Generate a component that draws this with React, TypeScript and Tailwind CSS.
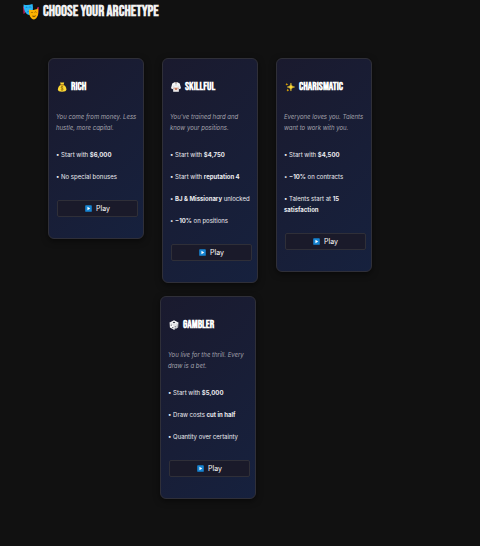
import React from 'react';

type IconProps = { className?: string };

const MasksIcon: React.FC<IconProps> = ({ className }) => (
    <svg viewBox="0 0 32 32" className={className} aria-hidden="true">
        <path d="M0 5h3l1 13-3 2zM28 7l4-1-2 17-3 1z" fill="#c2185b" />
        <path d="M1 1c6 2 12 1 18-1 2 10 1 19-6 22C5 21 1 12 1 1z" fill="#29b6f6" />
        <path d="M5 8c1-2 3-2 4 0M12 7c1-2 3-2 4 0M8 17c1-3 4-3 5-1" stroke="#0277bd" strokeWidth="1.4" fill="none" />
        <path d="M12 11c7 2 12 1 18-2 2 11-1 20-8 22-7-1-11-10-10-20z" fill="#ffb300" />
        <path d="M16 18c1-2 3-2 4 0M23 17c1-2 3-2 4 0" stroke="#8d5a00" strokeWidth="1.5" fill="none" />
        <path d="M18 23c3 1 6 1 8-1 0 5-7 6-8 1z" fill="#8d5a00" />
    </svg>
);

const MoneyBagIcon: React.FC<IconProps> = ({ className }) => (
    <svg viewBox="0 0 32 32" className={className} aria-hidden="true">
        <path d="M10 1c3 2 4 0 6 1 3-2 4 1 7-1l-2 8h-9z" fill="#fdd835" />
        <path d="M12 9h9c6 4 9 9 9 14 0 6-5 8-14 8S3 29 3 23c0-5 3-10 9-14z" fill="#fdd835" />
        <path d="M11 8h11v3H11z" fill="#a66a00" />
        <path d="M20 16c-2-2-7-2-7 1 0 4 7 2 7 6 0 3-5 3-8 1M16 13v15" stroke="#7a5900" strokeWidth="2" fill="none" />
    </svg>
);

const UniformIcon: React.FC<IconProps> = ({ className }) => (
    <svg viewBox="0 0 32 32" className={className} aria-hidden="true">
        <path d="M11 1h10l7 4 4 15-6 3-1-5v13H7V18l-1 5-6-3L4 5z" fill="#f5f5f5" />
        <path d="M12 1l4 6 4-6" fill="#a1887f" />
        <path d="M12 1l8 13M20 1l-8 13M7 18l1-6M25 18l-1-6" stroke="#b0bec5" strokeWidth="1.2" fill="none" />
        <path d="M8 18h16v3h-6l3 5h-3l-2-3-2 3h-3l3-5H8z" fill="#bf6a4a" />
    </svg>
);

const SparklesIcon: React.FC<IconProps> = ({ className }) => (
    <svg viewBox="0 0 32 32" className={className} aria-hidden="true">
        <path d="M19 3c1 9 3 11 12 13-9 2-11 4-12 13-1-9-3-11-12-13 9-2 11-4 12-13z" fill="#fdd835" stroke="#fdd835" strokeWidth="1.5" />
        <path d="M6 2c1 4 1 4 5 5-4 1-4 1-5 5-1-4-1-4-5-5 4-1 4-1 5-5zM9 21c1 4 1 4 4 5-3 1-3 1-4 5-1-4-1-4-4-5 3-1 3-1 4-5z" fill="#f4b400" />
    </svg>
);

const DieIcon: React.FC<IconProps> = ({ className }) => (
    <svg viewBox="0 0 32 32" className={className} aria-hidden="true">
        <path d="M16 1l14 7-1 16-13 7-13-7L2 8z" fill="#fafafa" />
        <path d="M2 8l14 8 14-8M16 16v15" stroke="#b0b4bd" strokeWidth="1.4" fill="none" />
        <ellipse cx="16" cy="8" rx="4" ry="2.4" fill="#3b3f4a" />
        <circle cx="7" cy="16" r="2" fill="#3b3f4a" />
        <circle cx="12" cy="24" r="2" fill="#3b3f4a" />
        <circle cx="20" cy="20" r="1.8" fill="#3b3f4a" />
        <circle cx="26" cy="16" r="1.8" fill="#3b3f4a" />
        <circle cx="20" cy="26" r="1.8" fill="#3b3f4a" />
        <circle cx="26" cy="22" r="1.8" fill="#3b3f4a" />
    </svg>
);

const PlayIcon: React.FC<IconProps> = ({ className }) => (
    <svg viewBox="0 0 32 32" className={className} aria-hidden="true">
        <rect x="1" y="1" width="30" height="30" rx="3" fill="#1685d3" />
        <path d="M11 8l13 8-13 8z" fill="#fff" />
    </svg>
);

type Archetype = {
    name: string;
    icon: React.FC<IconProps>;
    blurb: string;
    perks: React.ReactNode[];
};

const rich: Archetype = {
    name: 'RICH',
    icon: MoneyBagIcon,
    blurb: 'You come from money. Less hustle, more capital.',
    perks: [<>Start with <b>$6,000</b></>, 'No special bonuses'],
};

const skillful: Archetype = {
    name: 'SKILLFUL',
    icon: UniformIcon,
    blurb: "You've trained hard and know your positions.",
    perks: [
        <>Start with <b>$4,750</b></>,
        <>Start with <b>reputation 4</b></>,
        <><b>BJ &amp; Missionary</b> unlocked</>,
        <><b>−10%</b> on positions</>,
    ],
};

const charismatic: Archetype = {
    name: 'CHARISMATIC',
    icon: SparklesIcon,
    blurb: 'Everyone loves you. Talents want to work with you.',
    perks: [
        <>Start with <b>$4,500</b></>,
        <><b>−10%</b> on contracts</>,
        <>Talents start at <b>15</b> <b>satisfaction</b></>,
    ],
};

const gambler: Archetype = {
    name: 'GAMBLER',
    icon: DieIcon,
    blurb: 'You live for the thrill. Every draw is a bet.',
    perks: [
        <>Start with <b>$5,000</b></>,
        <>Draw costs <b>cut in half</b></>,
        'Quantity over certainty',
    ],
};

const ArchetypeCard: React.FC<{ archetype: Archetype }> = ({ archetype }) => {
    const Icon = archetype.icon;
    return (
        <article className="w-24 rounded-md border border-[#2f2f38] bg-linear-135 from-[#1a1a2e] to-[#16213e] pt-[22px] pr-[5px] pb-[21px] pl-[7px] shadow-[0_2px_6px_rgba(0,0,0,0.5)]">
            <h3 className="flex items-center gap-1 pl-px font-['Bebas_Neue',sans-serif] text-[11px] leading-3 font-bold text-white">
                <Icon className="size-[10px] shrink-0" />
                {archetype.name}
            </h3>
            <p className="mt-[18px] text-[6px] leading-[11px] text-[#a3a3ad] italic">{archetype.blurb}</p>
            <ul className="mt-4 space-y-[11px] text-[6px] leading-[11px] text-[#ececf0]">
                {archetype.perks.map((perk, i) => (
                    <li key={i}>• {perk}</li>
                ))}
            </ul>
            <button className="mt-[18px] ml-px flex h-[17px] w-[81px] items-center justify-center gap-1 rounded-xs border border-[#2f2f38] bg-[#1a1a2a] text-[7px] leading-none text-white">
                <PlayIcon className="size-[7px]" />
                Play
            </button>
        </article>
    );
};

export default function App() {
    return (
        <main className="min-h-screen bg-[#111111] pb-12 font-['Inter',sans-serif]">
            <h1 className="flex items-center gap-1 pt-1 pl-[23px] font-['Bebas_Neue',sans-serif] text-[15px] leading-4 font-bold text-[#f0f0f0]">
                <MasksIcon className="size-4" />
                CHOOSE YOUR ARCHETYPE
            </h1>
            <div className="mt-[38px] max-w-[420px] space-y-[13px]">
                <div className="flex flex-wrap items-start justify-center gap-[18px]">
                    <ArchetypeCard archetype={rich} />
                    <ArchetypeCard archetype={skillful} />
                    <ArchetypeCard archetype={charismatic} />
                </div>
                <div className="flex justify-center pr-1">
                    <ArchetypeCard archetype={gambler} />
                </div>
            </div>
        </main>
    );
}
